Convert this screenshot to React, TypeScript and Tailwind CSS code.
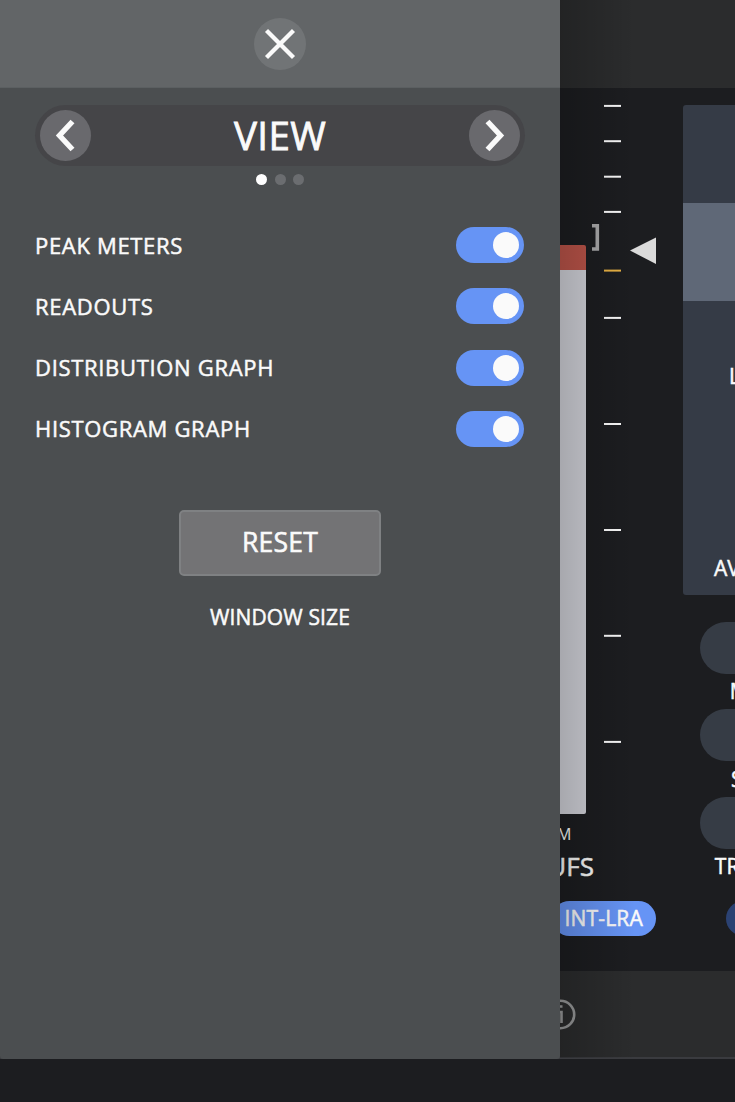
import React from "react";

const options = ["PEAK METERS", "READOUTS", "DISTRIBUTION GRAPH", "HISTOGRAM GRAPH"];

const ticks = [0.9, 36.2, 71.7, 106.9, 212.9, 319, 425, 530.8, 636.9];

function Toggle() {
  return (
    <button className="flex h-9 w-[68px] items-center justify-end rounded-full bg-[#6694f5] pr-[5px]">
      <span className="size-[26px] rounded-full bg-[#fafafa]" />
    </button>
  );
}

function RoundButton({ path, label }: { path: string; label: string }) {
  return (
    <button aria-label={label} className="size-[51px] rounded-full bg-[#69696d]">
      <svg viewBox="0 0 51 51" className="size-full" fill="none" stroke="#fafafa" strokeWidth="5.4">
        <path d={path} />
      </svg>
    </button>
  );
}

function Meter() {
  return (
    <div className="flex h-[709px]">
      <div className="mt-[140px] flex h-[568.5px] w-[66px] flex-col overflow-hidden rounded-[2px]">
        <div className="h-[25px] bg-[#bb5449]" />
        <div className="grow bg-[#d1d2d9]" />
      </div>
      <svg width="70" height="709" className="shrink-0 overflow-visible">
        <path d="M6 120.8h5.3v23.2H6" fill="none" stroke="#a9a9aa" strokeWidth="3.6" />
        {ticks.map((y) => (
          <rect key={y} x="18" y={y - 1} width="17" height="2" fill="#fafafa" />
        ))}
        <rect x="18" y="164.6" width="17" height="2" fill="#e8b244" />
        <path d="M44 145.5 70 132.5v26.5z" fill="#dadada" />
      </svg>
    </div>
  );
}

function Knob({ label }: { label: string }) {
  return (
    <div className="flex h-[87.5px] w-[104px] flex-col items-center">
      <span className="h-[52px] w-full shrink-0 rounded-full bg-[#363c45]" />
      <span className="mt-[2.5px] whitespace-nowrap text-[21px] leading-[30px]">{label}</span>
    </div>
  );
}

function Sidebar() {
  return (
    <div className="ml-[27px] mt-[17.5px] w-[138px] shrink-0">
      <div className="h-[490px] rounded-[3px] bg-[#353b46]">
        <div className="h-[98px]" />
        <div className="h-[98px] bg-[#5f6877]" />
        <div className="h-[60px]" />
        <div className="pl-[46px] text-[21px] leading-[30px]">LRA</div>
        <div className="mt-[162px] pl-[31px] text-[21px] leading-[30px]">AVG DYN</div>
      </div>
      <div className="ml-[17px] mt-[26.5px] w-[104px]">
        <Knob label="MAX" />
        <Knob label="STM" />
        <Knob label="TR MAX" />
      </div>
      <span className="ml-[43px] mt-[17px] block h-[35px] w-[60px] rounded-full bg-[#2b4273]" />
    </div>
  );
}

function Drawer() {
  return (
    <aside className="absolute left-0 top-0 h-[1058.5px] w-[560px] rounded-b-[3px] bg-[#4b4e50]">
      <div className="flex h-[88px] items-center justify-center border-b border-[#5b5f61] bg-[#626567]">
        <button aria-label="Close" className="size-[52px] rounded-full bg-[#717476]">
          <svg viewBox="0 0 52 52" className="size-full" fill="none" stroke="#fafafa" strokeWidth="4.3">
            <path d="M12.5 12.5 39.5 39.5M39.5 12.5 12.5 39.5" />
          </svg>
        </button>
      </div>
      <div className="mx-[35px] mt-[17px] flex h-[61px] items-center justify-between rounded-full bg-[#454548] px-[5px]">
        <RoundButton label="Previous" path="M32.5 11.5 19.5 25.5 32.5 39.5" />
        <h1 className="text-[38.5px] leading-none tracking-[0.4px] [-webkit-text-stroke:0.8px]">VIEW</h1>
        <RoundButton label="Next" path="M18.5 11.5 31.5 25.5 18.5 39.5" />
      </div>
      <div className="mt-2 flex justify-center gap-[7.5px]">
        <span className="size-[11px] rounded-full bg-white" />
        <span className="size-[11px] rounded-full bg-[#6b6d70]" />
        <span className="size-[11px] rounded-full bg-[#6b6d70]" />
      </div>
      <div className="ml-[35px] mr-9 mt-[42px] flex flex-col gap-[25.3px]">
        {options.map((name) => (
          <div key={name} className="flex h-9 items-center justify-between">
            <span className="-mt-px text-[22px] leading-[34px] tracking-[0.68px]">{name}</span>
            <Toggle />
          </div>
        ))}
      </div>
      <div className="mt-[63px] flex flex-col items-center">
        <button className="h-[66px] w-[202px] rounded-[5px] border-2 border-[#7f8183] bg-[#737375] text-[26.5px] tracking-[0.2px] [-webkit-text-stroke:0.6px]">
          RESET
        </button>
        <span className="mt-[26.5px] text-[21px] leading-[30px] tracking-[0.15px]">WINDOW SIZE</span>
      </div>
    </aside>
  );
}

export default function App() {
  return (
    <div className="relative flex h-[1102px] w-[735px] flex-col overflow-hidden bg-[#1c1d20] font-['Open_Sans','Noto_Sans',sans-serif] font-normal text-[#fafafa] [-webkit-text-stroke:0.5px]">
      <header className="h-[87.5px] shrink-0 bg-[#2b2c2d]" />
      <main className="flex h-[883.5px] shrink-0">
        <div className="w-[656px] shrink-0 pl-[520px] pt-[17.5px]">
          <Meter />
          <div className="mt-[8.5px] pl-[37px] text-[16px] leading-[22px] [-webkit-text-stroke:0px]">M</div>
          <div className="mt-[5px] w-[74px] text-right text-[26px] leading-8">LUFS</div>
          <div className="ml-8 mt-[19.5px] flex h-[35px] w-[104px] items-center justify-end rounded-full bg-[#6694f5] pr-[13px] text-[21px] tracking-[0.2px]">
            INT-LRA
          </div>
        </div>
        <Sidebar />
      </main>
      <footer className="flex h-[88px] shrink-0 items-center border-b-2 border-[#3a3b3f] bg-[#2b2c2d] pl-[545px]">
        <svg width="31" height="31" fill="none" stroke="#98999a" strokeWidth="2.6">
          <circle cx="15.5" cy="15.5" r="13.7" />
          <path d="M12.5 13h4v11M15 7.5h2.5" />
        </svg>
      </footer>
      <div className="pointer-events-none absolute left-[560px] top-0 h-[1058px] w-[75px] bg-linear-to-r from-black/20 to-transparent" />
      <Drawer />
    </div>
  );
}
